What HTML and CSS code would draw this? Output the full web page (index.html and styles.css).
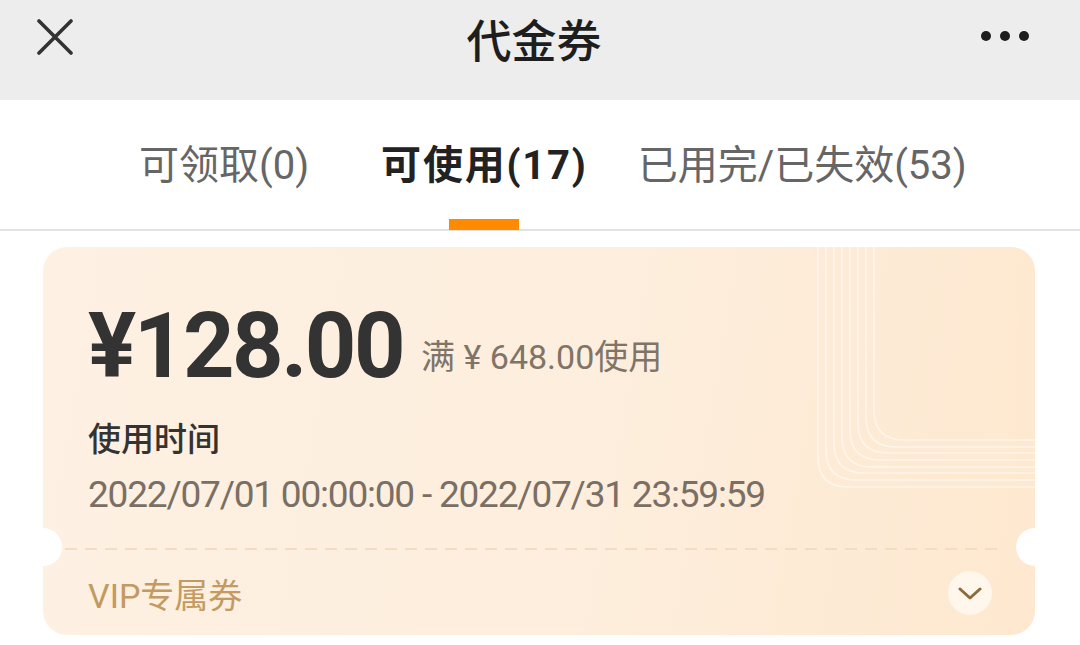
FILE: index.html
```html
<!DOCTYPE html>
<html lang="zh-CN">
<head>
<meta charset="utf-8">
<title>代金券</title>
<link rel="stylesheet" href="styles.css">
</head>
<body>
<header class="topbar">
  <svg class="close-icon" width="36" height="36" viewBox="0 0 36 36"><path d="M2 2 L34 34 M34 2 L2 34" stroke="#333" stroke-width="3.6" stroke-linecap="round" fill="none"/></svg>
  <h1 class="title">代金券</h1>
  <div class="more"><span></span><span></span><span></span></div>
</header>
<nav class="tabs">
  <div class="tab">可领取(0)</div>
  <div class="tab active">可使用(17)<i class="indicator"></i></div>
  <div class="tab last">已用完/已失效(53)</div>
</nav>
<main class="list">
  <section class="coupon">
    <svg class="deco" width="992" height="388" viewBox="0 0 992 388">
      <g fill="none" stroke="#fff8ef" stroke-width="1.6" opacity="0.85">
        <path d="M775 0 V210 Q775 240 805 240 H992"/>
        <path d="M783 0 V203 Q783 233 813 233 H992"/>
        <path d="M791 0 V196 Q791 226 821 226 H992"/>
        <path d="M799 0 V190 Q799 220 829 220 H992"/>
        <path d="M807 0 V183 Q807 213 837 213 H992"/>
        <path d="M815 0 V176 Q815 206 845 206 H992"/>
        <path d="M823 0 V170 Q823 200 853 200 H992"/>
        <path d="M831 0 V163 Q831 193 861 193 H992"/>
      </g>
    </svg>
    <div class="coupon-main">
      <div class="amount-row">
        <div class="amount">¥128.00</div>
        <div class="condition">满 ¥ 648.00使用</div>
      </div>
      <div class="time-label">使用时间</div>
      <div class="time-range">2022/07/01 00:00:00 - 2022/07/31 23:59:59</div>
    </div>
    <div class="divider"></div>
    <div class="coupon-foot">
      <span class="tag">VIP专属券</span>
      <span class="expand"><svg width="24" height="14" viewBox="0 0 24 14"><path d="M2 2 L12 11 L22 2" fill="none" stroke="#8d6b3d" stroke-width="3" stroke-linecap="round" stroke-linejoin="round"/></svg></span>
    </div>
  </section>
</main>
</body>
</html>
```
FILE: styles.css
```css
* { box-sizing: border-box; }
html, body { margin: 0; padding: 0; }
body {
  width: 1080px;
  height: 645px;
  overflow: hidden;
  background: #fff;
  font-family: Roboto, "Noto Sans CJK SC", sans-serif;
  color: #222;
}
.topbar {
  height: 100px;
  background: #ededed;
  display: flex;
  align-items: center;
  justify-content: space-between;
  padding: 0 51px 28px 37px;
}
.close-icon { display: block; margin-top: 1px; }
.title {
  margin: 0;
  font-size: 45px;
  font-weight: 500;
  color: #1e1e1e;
  line-height: 60px;
  font-family: "Noto Sans CJK SC", sans-serif;
  margin-left: 14px;
  margin-top: 6px;
}
.more { display: flex; gap: 9px; width: 48px; }
.more span {
  width: 10px; height: 10px; border-radius: 50%; background: #1e1e1e; display: block;
}
.tabs {
  height: 131px;
  border-bottom: 2px solid #e2e2e2;
  display: flex;
  align-items: flex-start;
  padding-left: 139px;
  padding-top: 40px;
}
.tab {
  position: relative;
  font-size: 40px;
  line-height: 52px;
  color: #666;
  display: flex;
  flex-direction: column;
  align-items: center;
  white-space: nowrap;
}
.tab.active {
  color: #222;
  font-weight: 700;
  margin-left: 72px;
  letter-spacing: 1.8px;
}
.tab.last { margin-left: 50px; }
.indicator {
  display: block;
  width: 70px;
  height: 11px;
  background: #ff8a00;
  margin-top: 27px;
}
.list { padding: 16px 45px 0 43px; }
.coupon {
  position: relative;
  height: 388px;
  border-radius: 24px;
  background: linear-gradient(100deg, #fdf1e3 0%, #fdeedd 55%, #fee8cf 100%);
  overflow: hidden;
}
.coupon::before, .coupon::after {
  content: "";
  position: absolute;
  top: 281px;
  width: 38px;
  height: 38px;
  border-radius: 50%;
  background: #fff;
}
.coupon::before { left: -19px; }
.coupon::after { right: -19px; }
.deco { position: absolute; left: 0; top: 0; pointer-events: none; }
.coupon-main {
  position: relative;
  padding: 55px 45px 0 45px;
}
.amount-row { display: flex; align-items: flex-end; gap: 18px; }
.amount {
  font-size: 90px;
  line-height: 90px;
  font-weight: 700;
  color: #333;
  letter-spacing: -2.5px;
}
.condition {
  font-size: 34px;
  line-height: 40px;
  color: #807468;
  margin-bottom: 15px;
}
.time-label {
  margin-top: 22px;
  font-size: 33px;
  line-height: 46px;
  font-weight: 500;
  color: #333;
  font-family: "Noto Sans CJK SC", sans-serif;
}
.time-range {
  margin-top: 12px;
  font-size: 37px;
  line-height: 46px;
  color: #7a6f65;
  letter-spacing: -1.2px;
}
.divider {
  position: relative;
  margin: 30px 30px 0 22px;
  height: 2px;
  background: repeating-linear-gradient(90deg, #f3dcc1 0 12px, transparent 12px 20px);
}
.coupon-foot {
  position: relative;
  height: 86px;
  display: flex;
  align-items: center;
  justify-content: space-between;
  padding: 0 43px 0 45px;
}
.tag {
  font-size: 34px;
  color: #c29a62;
}
.expand {
  width: 44px;
  height: 44px;
  border-radius: 50%;
  background: #fff6ec;
  display: flex;
  align-items: center;
  justify-content: center;
}
.expand svg { display: block; margin-top: 2px; }
```
